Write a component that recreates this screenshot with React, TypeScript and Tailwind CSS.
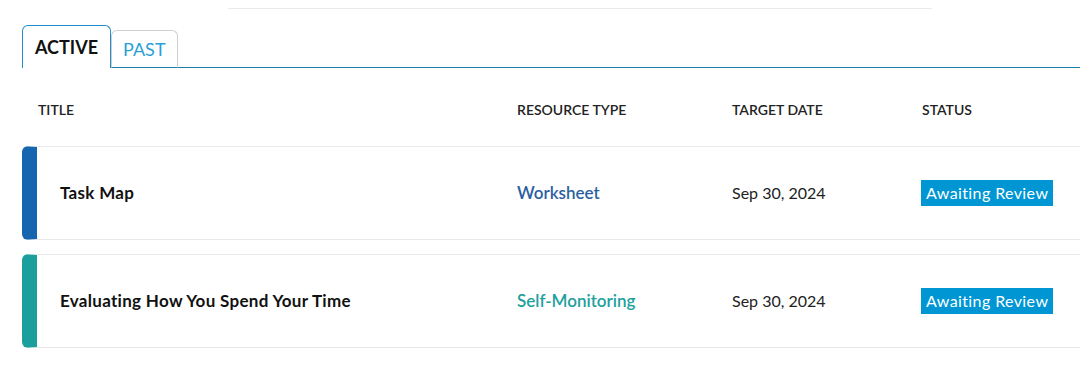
import React from 'react';

type Item = {
  title: string;
  type: string;
  date: string;
  status: string;
  bar: string;
  typeColor: string;
};

const items: Item[] = [
  {
    title: 'Task Map',
    type: 'Worksheet',
    date: 'Sep 30, 2024',
    status: 'Awaiting Review',
    bar: 'border-l-[#1565b0]',
    typeColor: 'text-[#2b5f9f]',
  },
  {
    title: 'Evaluating How You Spend Your Time',
    type: 'Self-Monitoring',
    date: 'Sep 30, 2024',
    status: 'Awaiting Review',
    bar: 'border-l-[#1a9f9c]',
    typeColor: 'text-[#21a09d]',
  },
];

const Row: React.FC<{ item: Item }> = ({ item }) => (
  <div
    className={`grid grid-cols-[480px_215px_189px_1fr] items-center h-[94px] border-y border-[#e9e9e9] border-l-[15px] ${item.bar} rounded-l-[6px] bg-white`}
  >
    <div className="pl-[23px] text-[17px] tracking-[0.3px] font-bold text-[#111]">{item.title}</div>
    <div className={`text-[17px] font-semibold ${item.typeColor}`}>{item.type}</div>
    <div className="text-[16px] text-[#222]">{item.date}</div>
    <div>
      <span className="inline-block bg-[#0096d4] text-white text-[16px] tracking-[0.4px] leading-[26px] px-[5px]">
        {item.status}
      </span>
    </div>
  </div>
);

export default function App() {
  return (
    <div className="w-[1080px] h-[380px] bg-white overflow-hidden font-['Lato',sans-serif]">
      <div className="pt-[8px]">
        <div className="ml-[228px] w-[704px] h-px bg-[#ebebeb]" />
      </div>

      <div className="pl-[22px] mt-[16px]">
        <div className="flex items-end h-[43px]">
          <div className="h-[43px] px-[12px] flex items-center border border-b-0 border-[#1f8fcb] rounded-t-[6px] text-[18px] font-bold text-[#111]">
            ACTIVE
          </div>
          <div className="h-[38px] px-[11px] flex items-center border border-[#cfcfcf] border-b-[#1a7ca8] rounded-t-[6px] text-[18px] text-[#2a9fd8]">
            PAST
          </div>
          <div className="flex-1 self-stretch border-b border-[#1a7ca8]" />
        </div>

        <div className="grid grid-cols-[495px_215px_190px_1fr] pt-[34px] pb-[28px] text-[14px] leading-[16px] font-semibold text-[#222]">
          <div className="pl-[16px]">TITLE</div>
          <div>RESOURCE TYPE</div>
          <div>TARGET DATE</div>
          <div>STATUS</div>
        </div>

        <div className="flex flex-col gap-[14px]">
          {items.map((item) => (
            <Row key={item.title} item={item} />
          ))}
        </div>
      </div>
    </div>
  );
}
